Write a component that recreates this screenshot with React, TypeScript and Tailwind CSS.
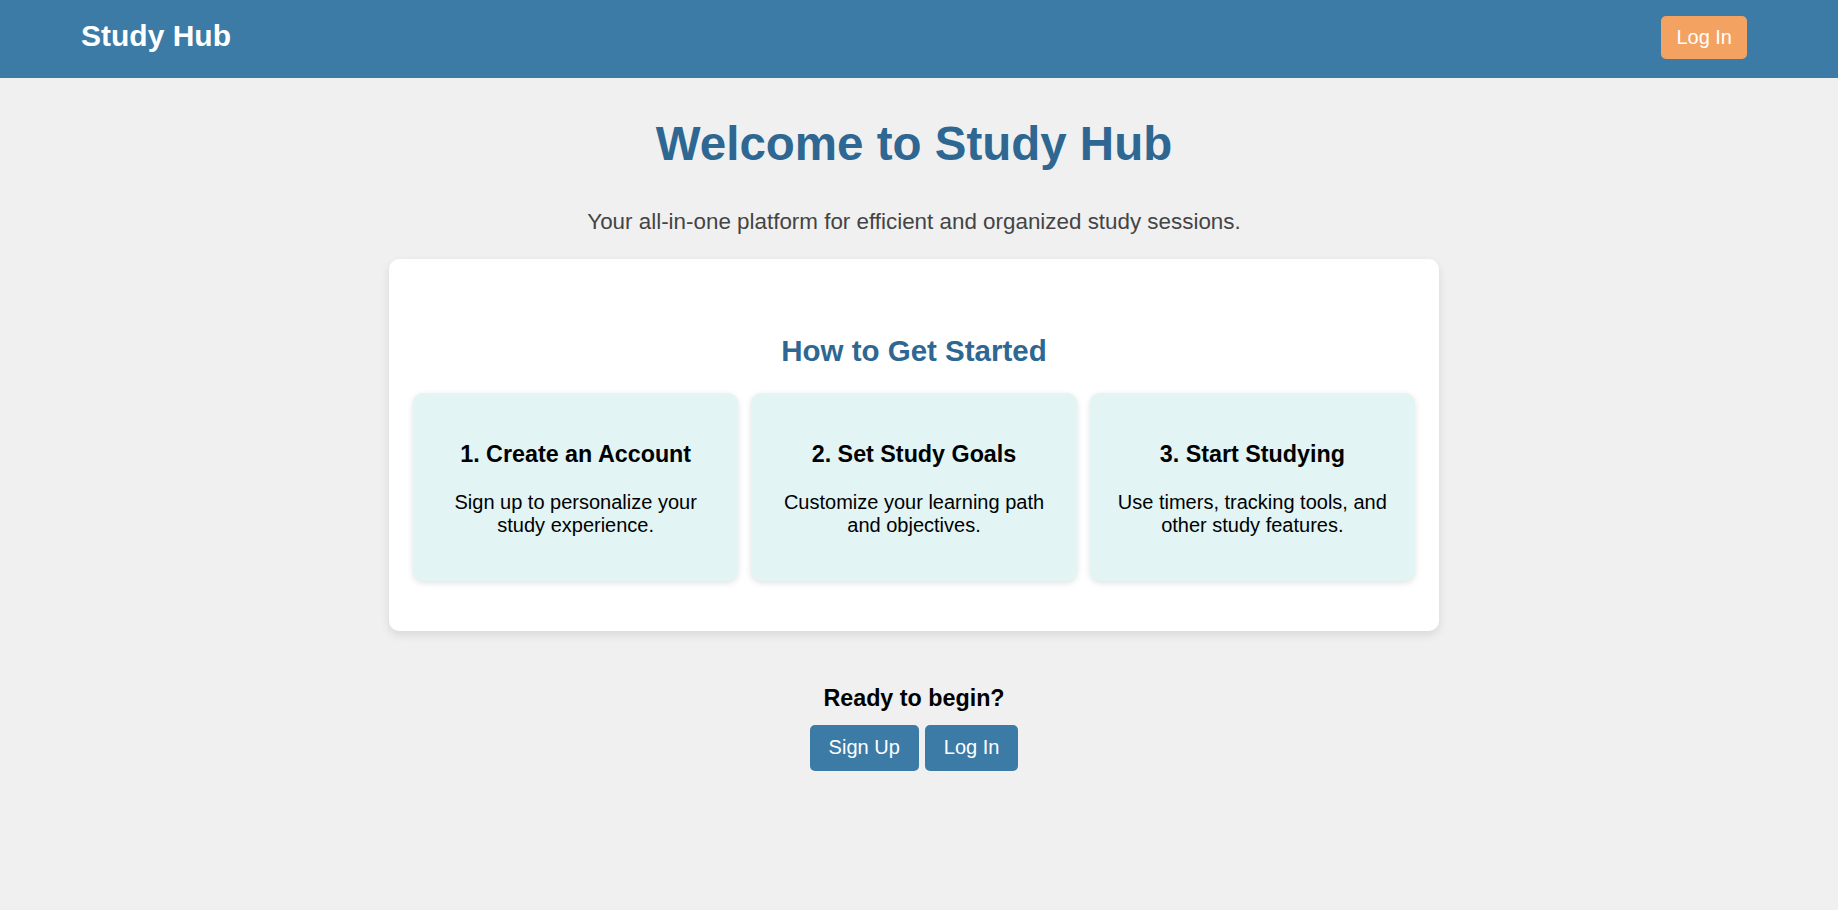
const steps = [
  {
    title: "1. Create an Account",
    text: "Sign up to personalize your study experience.",
  },
  {
    title: "2. Set Study Goals",
    text: "Customize your learning path and objectives.",
  },
  {
    title: "3. Start Studying",
    text: "Use timers, tracking tools, and other study features.",
  },
];

function StepCard({ title, text }: { title: string; text: string }) {
  return (
    <div className="flex-1 rounded-[10px] bg-[#e2f4f4] px-5 pt-[48px] pb-[44px] text-center shadow-[0_2px_6px_rgba(0,0,0,0.12)]">
      <h3 className="mb-[23px] text-[23.3px] font-bold text-black">{title}</h3>
      <p className="text-[20px] text-black">{text}</p>
    </div>
  );
}

export default function App() {
  return (
    <div className="min-h-[910px] bg-[#f0f0f0] font-['Liberation_Sans',Arial,sans-serif] leading-[1.15]">
      <header className="flex h-[78px] items-center justify-between bg-[#3b7ba6] pb-[3px] pl-[81px] pr-[91px]">
        <h1 className="mb-[3px] text-[30px] font-bold text-white">Study Hub</h1>
        <button className="h-[43px] rounded-[5px] bg-[#f4a261] px-[15px] text-[20px] text-white">
          Log In
        </button>
      </header>

      <main className="flex flex-col items-center pr-[10px]">
        <h2 className="mt-[39px] text-[47.5px] font-bold text-[#2e6792]">
          Welcome to Study Hub
        </h2>
        <p className="mt-[37px] text-[22.4px] text-[#444]">
          Your all-in-one platform for efficient and organized study sessions.
        </p>

        <section className="mt-[25px] w-[1050px] rounded-[10px] bg-white px-6 pt-[75px] pb-[50px] shadow-[0_4px_10px_rgba(0,0,0,0.1)]">
          <h2 className="text-center text-[29.5px] font-bold text-[#2e6792]">
            How to Get Started
          </h2>
          <div className="mt-[25px] flex gap-[13px]">
            {steps.map((s) => (
              <StepCard key={s.title} title={s.title} text={s.text} />
            ))}
          </div>
        </section>

        <h3 className="mt-[54px] text-[23.3px] font-bold text-black">Ready to begin?</h3>
        <div className="mt-[13px] flex gap-[6px]">
          <button className="h-[46px] rounded-[5px] bg-[#3b7ba6] px-[19px] text-[20px] text-white">
            Sign Up
          </button>
          <button className="h-[46px] rounded-[5px] bg-[#3b7ba6] px-[19px] text-[20px] text-white">
            Log In
          </button>
        </div>
      </main>
    </div>
  );
}
